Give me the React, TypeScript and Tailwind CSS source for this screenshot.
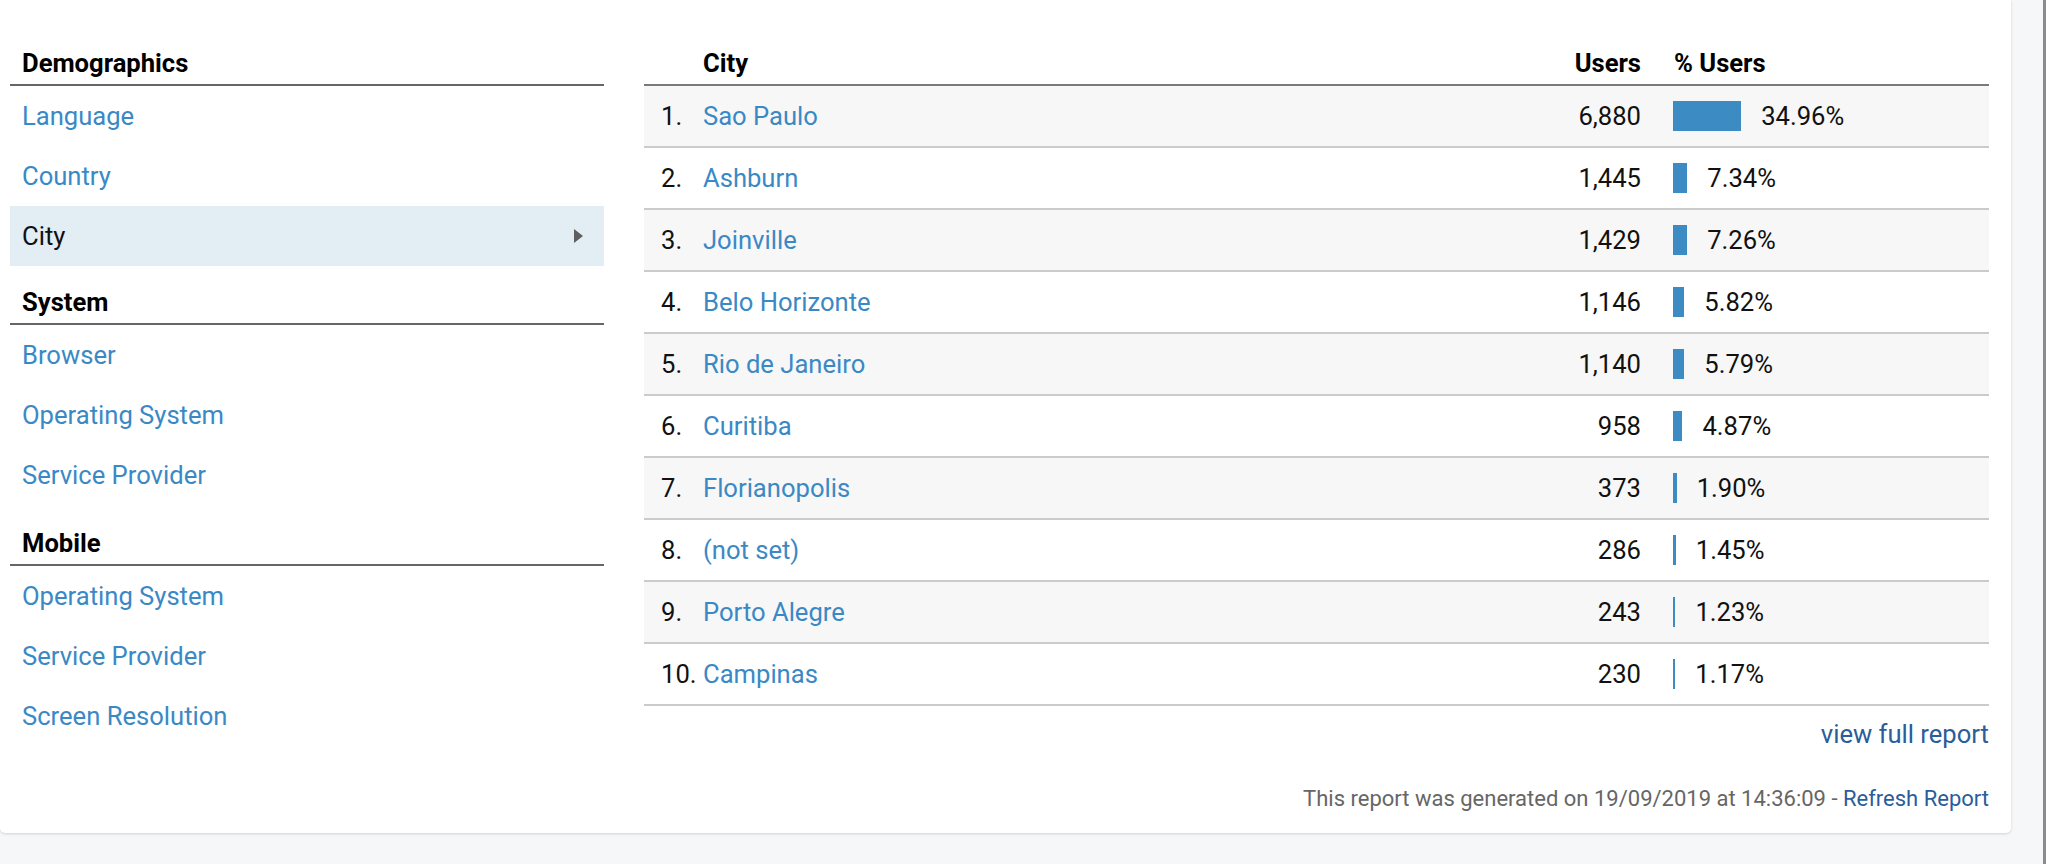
import React from "react";

type Section = {
  title: string;
  gap: string;
  items: { label: string; active?: boolean }[];
};

const sections: Section[] = [
  {
    title: "Demographics",
    gap: "h-[58px]",
    items: [{ label: "Language" }, { label: "Country" }, { label: "City", active: true }],
  },
  {
    title: "System",
    gap: "h-[59px]",
    items: [{ label: "Browser" }, { label: "Operating System" }, { label: "Service Provider" }],
  },
  {
    title: "Mobile",
    gap: "h-[61px]",
    items: [
      { label: "Operating System" },
      { label: "Service Provider" },
      { label: "Screen Resolution" },
    ],
  },
];

const cities = [
  { city: "Sao Paulo", users: "6,880", pct: 34.96 },
  { city: "Ashburn", users: "1,445", pct: 7.34 },
  { city: "Joinville", users: "1,429", pct: 7.26 },
  { city: "Belo Horizonte", users: "1,146", pct: 5.82 },
  { city: "Rio de Janeiro", users: "1,140", pct: 5.79 },
  { city: "Curitiba", users: "958", pct: 4.87 },
  { city: "Florianopolis", users: "373", pct: 1.9 },
  { city: "(not set)", users: "286", pct: 1.45 },
  { city: "Porto Alegre", users: "243", pct: 1.23 },
  { city: "Campinas", users: "230", pct: 1.17 },
];

function SideMenu() {
  return (
    <div className="w-[594px] shrink-0">
      {sections.map((s) => (
        <div key={s.title}>
          <div
            className={`${s.gap} flex items-end pl-[12px] pb-[6px] border-b-2 border-[#666] font-bold text-black leading-[30px]`}
          >
            {s.title}
          </div>
          {s.items.map((it) => (
            <div
              key={it.label}
              className={`h-[60px] flex items-center justify-between pl-[12px] pr-[21px] leading-[30px] ${
                it.active ? "bg-[#e2edf4] text-[#111]" : "text-[#3a89c5]"
              }`}
            >
              <span>{it.label}</span>
              {it.active && (
                <svg width="9" height="14" viewBox="0 0 9 14">
                  <polygon points="0,0 9,7 0,14" fill="#5f5f5f" />
                </svg>
              )}
            </div>
          ))}
        </div>
      ))}
    </div>
  );
}

function CityTable() {
  return (
    <div className="flex-1 min-w-0">
      <div className="h-[58px] flex items-end pl-[17px] pb-[6px] border-b-2 border-[#7a7a7a] font-bold text-black leading-[30px]">
        <div className="w-[42px]" />
        <div className="flex-1">City</div>
        <div className="w-[150px] text-right">Users</div>
        <div className="w-[316px] ml-[32px] pl-[1px]">% Users</div>
      </div>
      {cities.map((c, i) => (
        <div
          key={c.city}
          className={`h-[62px] flex items-center pl-[17px] border-b-2 border-[#cbcbcb] leading-[30px] ${
            i % 2 === 0 ? "bg-[#f7f7f7]" : "bg-white"
          }`}
        >
          <div className="w-[42px] text-[#111]">{i + 1}.</div>
          <div className="flex-1 text-[#3a89c5]">{c.city}</div>
          <div className="w-[150px] text-right text-[#111]">{c.users}</div>
          <div className="w-[316px] ml-[32px] flex items-center">
            <div className="h-[30px] bg-[#3d8bc3]" style={{ width: Math.max(2, c.pct * 1.95) }} />
            <span className="ml-[20px] text-[#111]">{c.pct.toFixed(2)}%</span>
          </div>
        </div>
      ))}
      <div className="mt-[13px] text-right text-[#2a5d9a] leading-[30px]">view full report</div>
      <div className="mt-[37px] text-right text-[22px] leading-[26px] text-[#666]">
        This report was generated on 19/09/2019 at 14:36:09 -{" "}
        <span className="text-[#2a5d9a]">Refresh Report</span>
      </div>
    </div>
  );
}

export default function App() {
  return (
    <div
      className="h-screen bg-[#f6f7f9] pr-[32px] border-r-[3px] border-[#8c8c8c] text-[25.6px]"
      style={{ fontFamily: "Roboto, 'Noto Sans', sans-serif" }}
    >
      <div className="bg-white rounded-b-[5px] shadow-[0_1px_3px_rgba(0,0,0,0.15)] pt-[28px] pl-[10px] pr-[22px] pb-[21px] flex gap-[40px] items-start">
        <SideMenu />
        <CityTable />
      </div>
    </div>
  );
}
